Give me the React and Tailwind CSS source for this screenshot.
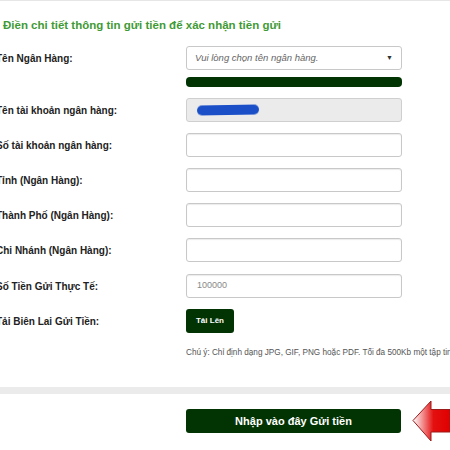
import React from 'react'

const fields = [
  'Số tài khoản ngân hàng:',
  'Tỉnh (Ngân Hàng):',
  'Thành Phố (Ngân Hàng):',
  'Chi Nhánh (Ngân Hàng):',
]

function Label({ children }) {
  return (
    <div className="w-[190px] -ml-[4px] shrink-0 text-[10px] font-bold text-[#222]">{children}</div>
  )
}

function Input({ value, placeholder }) {
  return (
    <div className="w-[216px] h-[24px] border border-[#c8c8c8] rounded-[3px] bg-white shadow-[inset_0_1px_1px_rgba(0,0,0,0.08)] flex items-center px-[10px] text-[9px] text-[#888]">
      {value || placeholder}
    </div>
  )
}

function Arrow() {
  return (
    <svg width="38" height="42" viewBox="0 0 38 42" className="shrink-0">
      <defs>
        <linearGradient id="ag" x1="0" y1="0" x2="1" y2="0">
          <stop offset="0" stopColor="#ffffff" />
          <stop offset="0.55" stopColor="#e41010" />
          <stop offset="1" stopColor="#e00000" />
        </linearGradient>
      </defs>
      <path d="M1 20.5 L19 1 L19 9.5 L38 9.5 L38 32 L19 32 L19 41 Z" fill="url(#ag)" stroke="#9b1a1a" strokeWidth="1" />
    </svg>
  )
}

export default function App() {
  return (
    <div className="w-[450px] h-[450px] overflow-hidden bg-white border-t border-[#e6e6e6] font-['Liberation_Sans',Arial,sans-serif]">
      <div className="pl-[3px] pt-[17px] text-[11.5px] font-bold text-[#3f9a36] whitespace-nowrap leading-[14px]">
        Điền chi tiết thông tin gửi tiền để xác nhận tiền gửi
      </div>

      <div className="mt-[14px] flex items-center">
        <Label>Tên Ngân Hàng:</Label>
        <div className="w-[216px] h-[24px] border border-[#c8c8c8] rounded-[3px] bg-white flex items-center justify-between px-[8px] text-[9.5px] italic text-[#666]">
          <span>Vui lòng chọn tên ngân hàng.</span>
          <span className="text-[7px] not-italic text-[#333]">▼</span>
        </div>
      </div>

      <div className="mt-[7px] flex">
        <div className="w-[186px] shrink-0" />
        <div className="w-[216px] h-[10px] rounded-[4px] bg-[#023302]" />
      </div>

      <div className="mt-[11px] flex items-center">
        <Label>Tên tài khoản ngân hàng:</Label>
        <div className="w-[216px] h-[24px] border border-[#cfcfcf] rounded-[3px] bg-[#ebebeb] flex items-center px-[10px]">
          <div className="w-[62px] h-[10px] rounded-full bg-[#1a4fc8] blur-[0.6px] -rotate-1" />
        </div>
      </div>

      {fields.map((f) => (
        <div key={f} className="mt-[11px] flex items-center">
          <Label>{f}</Label>
          <Input />
        </div>
      ))}

      <div className="mt-[12px] flex items-center">
        <Label>Số Tiền Gửi Thực Tế:</Label>
        <Input placeholder="100000" />
      </div>

      <div className="mt-[11px] flex items-center">
        <Label>Tải Biên Lai Gửi Tiền:</Label>
        <div className="w-[48px] h-[24px] rounded-[3px] bg-[#023302] text-white text-[8px] font-bold flex items-center justify-center">
          Tải Lên
        </div>
      </div>

      <div className="mt-[15px] pl-[186px] text-[8.2px] text-[#555] whitespace-nowrap leading-[10px]">
        Chú ý: Chỉ định dạng JPG, GIF, PNG hoặc PDF. Tối đa 500Kb một tập tin
      </div>

      <div className="mt-[29px] h-[7px] bg-[#ebebeb]" />

      <div className="mt-[6px] flex items-center">
        <div className="w-[186px] shrink-0" />
        <div className="w-[216px] h-[24px] rounded-[3px] bg-[#023302] text-white text-[11px] font-bold flex items-center justify-center">
          Nhập vào đây Gửi tiền
        </div>
        <div className="ml-[11px]">
          <Arrow />
        </div>
      </div>
    </div>
  )
}
